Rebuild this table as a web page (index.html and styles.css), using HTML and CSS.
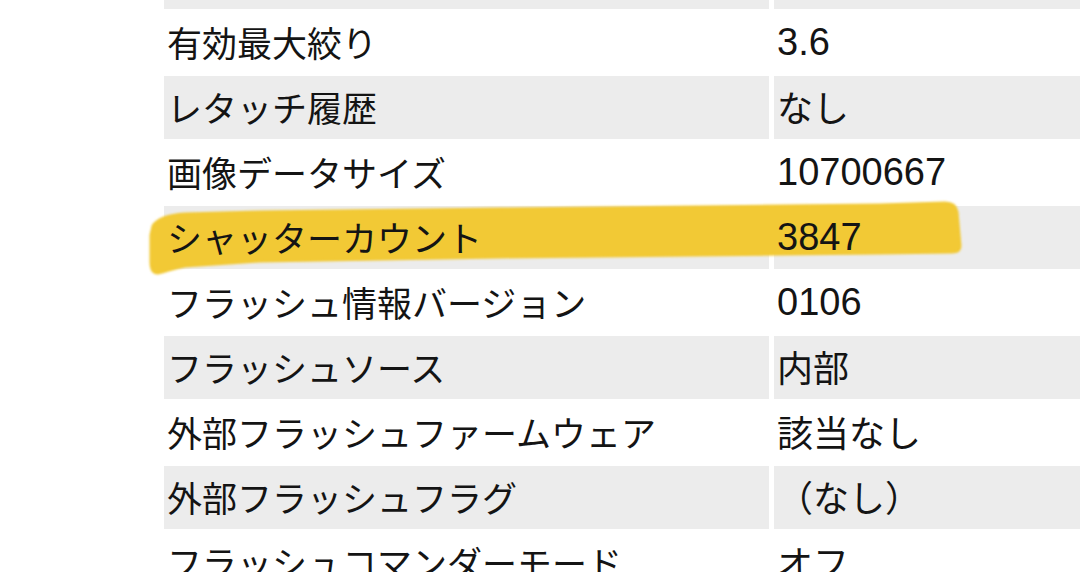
FILE: index.html
```html
<!DOCTYPE html>
<html lang="ja">
<head>
<meta charset="utf-8">
<title>撮影情報</title>
<link rel="stylesheet" href="styles.css">
</head>
<body>
<main class="page">
  <table class="spec">
    <tbody>
      <tr><td class="key"></td><td class="val"></td></tr>
      <tr><td class="key">有効最大絞り</td><td class="val"><span class="num">3.6</span></td></tr>
      <tr><td class="key">レタッチ履歴</td><td class="val">なし</td></tr>
      <tr><td class="key">画像データサイズ</td><td class="val"><span class="num">10700667</span></td></tr>
      <tr class="marked"><td class="key"><span class="over">シャッターカウント</span></td><td class="val"><span class="num over">3847</span></td></tr>
      <tr><td class="key">フラッシュ情報バージョン</td><td class="val"><span class="num">0106</span></td></tr>
      <tr><td class="key">フラッシュソース</td><td class="val">内部</td></tr>
      <tr><td class="key">外部フラッシュファームウェア</td><td class="val">該当なし</td></tr>
      <tr><td class="key">外部フラッシュフラグ</td><td class="val">（なし）</td></tr>
      <tr><td class="key">フラッシュコマンダーモード</td><td class="val">オフ</td></tr>
    </tbody>
  </table>
  <svg class="marker" width="1080" height="572" viewBox="0 0 1080 572" aria-hidden="true">
    <defs>
      <filter id="soft" x="-5%" y="-20%" width="110%" height="140%">
        <feGaussianBlur stdDeviation="0.8"/>
      </filter>
    </defs>
    <path filter="url(#soft)" fill="#f2c934" stroke="#f2c934" stroke-width="3" stroke-linejoin="round"
      d="M153,226 C158,218 170,215 185,214 L260,212 L500,209 L880,205 L945,203 C952,203 956,206 957,212 L960,246 C960,250 957,252 952,252 L880,253 L500,257 L260,261 L185,266 C172,268 165,272 158,273 C153,273 151,268 151,262 L151,235 Z"/>
  </svg>
</main>
</body>
</html>
```

FILE: styles.css
```css
html, body {
  margin: 0;
  padding: 0;
  background: #ffffff;
}

body {
  width: 1080px;
  height: 572px;
  overflow: hidden;
}

.page {
  position: relative;
  width: 1080px;
  height: 572px;
  overflow: hidden;
}

.spec {
  border-collapse: separate;
  border-spacing: 5px 2px;
  table-layout: fixed;
  width: 960px;
  margin: -56px 0 0 159px;
  font-family: "Noto Sans CJK JP", "Liberation Sans", sans-serif;
  font-size: 35px;
  color: #141414;
}

.spec td {
  height: 63px;
  padding: 0 0 3px 3px;
  vertical-align: middle;
  white-space: nowrap;
  overflow: hidden;
  line-height: 1;
  box-sizing: border-box;
}

.spec tr:nth-child(odd) td {
  background: #ececec;
}

.key {
  width: 605px;
}

.val {
  width: 340px;
  font-size: 36px;
}

.num {
  font-family: "Liberation Sans", Arial, sans-serif;
  font-size: 38px;
}

.over {
  position: relative;
  z-index: 2;
}

.marker {
  position: absolute;
  top: 0;
  left: 0;
  z-index: 1;
  pointer-events: none;
}
```
